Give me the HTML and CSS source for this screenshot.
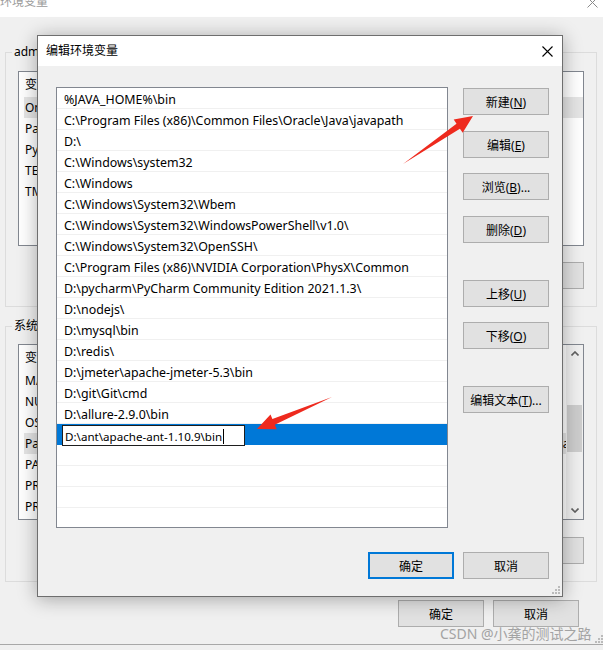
FILE: index.html
```html
<!DOCTYPE html>
<html lang="zh-CN">
<head>
<meta charset="utf-8">
<title>编辑环境变量</title>
<link rel="stylesheet" href="styles.css">
</head>
<body>
<div class="win">
  <div class="win-title">
    <span class="win-title-text">环境变量</span>
    <svg class="win-close" width="11" height="11" viewBox="0 0 11 11"><path d="M0.5 0.5L10.5 10.5M10.5 0.5L0.5 10.5" stroke="#8a8a8a" stroke-width="1"/></svg>
  </div>
  <div class="win-body">
    <div class="group g1">
      <div class="group-label">admin 的用户变量(<u>U</u>)</div>
      <div class="bglist l1">
        <div class="bgrows">
          <div class="bgrow head"><span class="c1">变量</span><span>值</span></div>
          <div class="bgrow sel"><span class="c1">OneDrive</span><span>C:\Users\admin\OneDrive</span></div>
          <div class="bgrow"><span class="c1">Path</span><span>C:\Users\admin\AppData\Local\Microsoft\WindowsApps;</span></div>
          <div class="bgrow"><span class="c1">PyCharm Community Edition</span><span>D:\pycharm\PyCharm Community Edition 2021.1.3\bin;</span></div>
          <div class="bgrow"><span class="c1">TEMP</span><span>C:\Users\admin\AppData\Local\Temp</span></div>
          <div class="bgrow"><span class="c1">TMP</span><span>C:\Users\admin\AppData\Local\Temp</span></div>
        </div>
      </div>
      <div class="bgbtns b1">
        <button class="btn">新建(<u>N</u>)...</button>
        <button class="btn">编辑(<u>E</u>)...</button>
        <button class="btn">删除(<u>D</u>)</button>
      </div>
    </div>
    <div class="group g2">
      <div class="group-label">系统变量(<u>S</u>)</div>
      <div class="bglist l2">
        <div class="bgrows">
          <div class="bgrow head"><span class="c1">变量</span><span>值</span></div>
          <div class="bgrow"><span class="c1">MAVEN_HOME</span><span>D:\maven</span></div>
          <div class="bgrow"><span class="c1">NUMBER_OF_PROCESSORS</span><span>8</span></div>
          <div class="bgrow"><span class="c1">OS</span><span>Windows_NT</span></div>
          <div class="bgrow sel"><span class="c1">Path</span><span>%JAVA_HOME%\bin;C:\Program Files (x86)\Common Files\Oracle\Java\javapath;</span></div>
          <div class="bgrow"><span class="c1">PATHEXT</span><span>.COM;.EXE;.BAT;.CMD;.VBS;.VBE;.JS;.JSE;.WSF;.WSH;.MSC</span></div>
          <div class="bgrow"><span class="c1">PROCESSOR_ARCHITECTURE</span><span>AMD64</span></div>
          <div class="bgrow"><span class="c1">PROCESSOR_IDENTIFIER</span><span>Intel64 Family 6</span></div>
        </div>
        <div class="vscroll">
          <div class="sarrow"><svg width="8" height="5" viewBox="0 0 8 5"><path d="M0.5 4.5L4 1L7.5 4.5" fill="none" stroke="#606060" stroke-width="1.6"/></svg></div>
          <div class="strack"><div class="sthumb"></div></div>
          <div class="sarrow"><svg width="8" height="5" viewBox="0 0 8 5"><path d="M0.5 0.5L4 4L7.5 0.5" fill="none" stroke="#606060" stroke-width="1.6"/></svg></div>
        </div>
      </div>
      <div class="bgbtns b2">
        <button class="btn">新建(<u>W</u>)...</button>
        <button class="btn">编辑(<u>I</u>)...</button>
        <button class="btn">删除(<u>L</u>)</button>
      </div>
    </div>
    <div class="win-foot">
      <button class="btn">确定</button>
      <button class="btn">取消</button>
    </div>
  </div>
  <svg class="grip win-grip" width="8" height="8" viewBox="0 0 8 8"><rect x="6" y="0" width="2" height="2" fill="#bbb"/><rect x="3" y="3" width="2" height="2" fill="#bbb"/><rect x="6" y="3" width="2" height="2" fill="#bbb"/><rect x="0" y="6" width="2" height="2" fill="#bbb"/><rect x="3" y="6" width="2" height="2" fill="#bbb"/><rect x="6" y="6" width="2" height="2" fill="#bbb"/></svg>
</div>

<div class="dlg">
  <div class="dlg-title">
    <span>编辑环境变量</span>
    <svg width="11" height="11" viewBox="0 0 11 11"><path d="M0.5 0.5L10.5 10.5M10.5 0.5L0.5 10.5" stroke="#000" stroke-width="1.1"/></svg>
  </div>
  <div class="dlg-body">
    <div class="dlg-main">
      <div class="plist">
        <div class="prow">%JAVA_HOME%\bin</div>
        <div class="prow">C:\Program Files (x86)\Common Files\Oracle\Java\javapath</div>
        <div class="prow">D:\</div>
        <div class="prow">C:\Windows\system32</div>
        <div class="prow">C:\Windows</div>
        <div class="prow">C:\Windows\System32\Wbem</div>
        <div class="prow">C:\Windows\System32\WindowsPowerShell\v1.0\</div>
        <div class="prow">C:\Windows\System32\OpenSSH\</div>
        <div class="prow">C:\Program Files (x86)\NVIDIA Corporation\PhysX\Common</div>
        <div class="prow">D:\pycharm\PyCharm Community Edition 2021.1.3\</div>
        <div class="prow">D:\nodejs\</div>
        <div class="prow">D:\mysql\bin</div>
        <div class="prow">D:\redis\</div>
        <div class="prow">D:\jmeter\apache-jmeter-5.3\bin</div>
        <div class="prow">D:\git\Git\cmd</div>
        <div class="prow">D:\allure-2.9.0\bin</div>
        <div class="prow psel"><div class="pedit">D:\ant\apache-ant-1.10.9\bin<span class="caret"></span></div></div>
        <div class="prow"></div>
        <div class="prow"></div>
        <div class="prow"></div>
        <div class="prow"></div>
      </div>
      <div class="pbtns">
        <button class="btn pb-new">新建(<u>N</u>)</button>
        <button class="btn pb-edit">编辑(<u>E</u>)</button>
        <button class="btn pb-browse">浏览(<u>B</u>)...</button>
        <button class="btn pb-del">删除(<u>D</u>)</button>
        <button class="btn pb-up">上移(<u>U</u>)</button>
        <button class="btn pb-down">下移(<u>O</u>)</button>
        <button class="btn pb-text">编辑文本(<u>T</u>)...</button>
      </div>
    </div>
    <div class="dlg-foot">
      <button class="btn btn-default">确定</button>
      <button class="btn">取消</button>
    </div>
  </div>
  <svg class="grip dlg-grip" width="8" height="8" viewBox="0 0 8 8"><rect x="6" y="0" width="2" height="2" fill="#bbb"/><rect x="3" y="3" width="2" height="2" fill="#bbb"/><rect x="6" y="3" width="2" height="2" fill="#bbb"/><rect x="0" y="6" width="2" height="2" fill="#bbb"/><rect x="3" y="6" width="2" height="2" fill="#bbb"/><rect x="6" y="6" width="2" height="2" fill="#bbb"/></svg>
</div>

<svg class="arrows" width="603" height="650" viewBox="0 0 603 650">
  <polygon points="403,164 456.5,123.7 453.7,119.6 473,116 462.7,132.8 459.9,128.7" fill="#ee2a1e"/>
  <polygon points="332,397 272.4,419.1 270.5,414.5 257,429 276.7,429.3 274.8,424.7" fill="#ee2a1e"/>
</svg>

<div class="watermark">CSDN @小龚的测试之路</div>
</body>
</html>
```

FILE: styles.css
```css
* { box-sizing: border-box; }

body {
  margin: 0;
  width: 603px;
  height: 650px;
  overflow: hidden;
  position: relative;
  background: #f0f0f0;
  font-family: "Noto Sans", "Noto Sans CJK SC", sans-serif;
  font-size: 12px;
  color: #000;
}

u { text-decoration: underline; text-underline-offset: 1px; }

.btn {
  font-family: inherit;
  font-size: 12px;
  color: #000;
  background: #e1e1e1;
  border: 1px solid #adadad;
  width: 86px;
  height: 27px;
  padding: 0;
  margin: 0;
  white-space: nowrap;
}

/* background window */
.win {
  height: 645px;
  border-bottom: 1px solid #a8a8a8;
  position: relative;
}

.win-title {
  height: 17px;
  background: #fff;
  display: flex;
  justify-content: space-between;
  overflow: hidden;
}

.win-title-text {
  color: #9a9a9a;
  line-height: 16px;
  margin-top: -6px;
}

.win-close { margin: -3px 5px 0 0; }

.win-body { padding: 0 6px 0 5px; }

.group { border: 1px solid #dcdcdc; }
.g1 { margin-top: 35px; }
.g2 { margin-top: 19px; }

.group-label {
  width: fit-content;
  margin: -9px 0 0 6px;
  padding: 0 2px;
  line-height: 16px;
  background: #f0f0f0;
  white-space: nowrap;
}

.bglist {
  margin: 11px 12px 0 12px;
  border: 1px solid #828790;
  background: #fff;
  display: flex;
  overflow: hidden;
}
.l1 { height: 175px; }
.l2 { height: 176px; margin-top: 10px; }

.bgrows { flex: 1; min-width: 0; }

.bgrow {
  height: 21px;
  line-height: 21px;
  margin-left: 5px;
  padding-left: 1px;
  display: flex;
  white-space: nowrap;
  overflow: hidden;
}
.bgrow.head { height: 25px; line-height: 25px; }
.bgrow.sel { background: #e5e5e5; }
.bgrow .c1 { width: 170px; flex: none; }

.vscroll {
  width: 17px;
  flex: none;
  background: #f0f0f0;
  display: flex;
  flex-direction: column;
}
.sarrow {
  height: 17px;
  display: flex;
  align-items: center;
  justify-content: center;
}
.strack { flex: 1; padding: 43px 1px 0 1px; }
.sthumb { height: 47px; background: #cdcdcd; }

.bgbtns {
  display: flex;
  justify-content: flex-end;
  gap: 8px;
  padding-right: 12px;
}
.b1 { margin-top: 16px; padding-bottom: 17px; }
.b2 { margin-top: 17px; padding-bottom: 17px; }

.win-foot {
  display: flex;
  justify-content: flex-end;
  gap: 9px;
  margin-top: 18px;
  padding-right: 18px;
}

.grip { position: absolute; }
.win-grip { right: 0; bottom: 1px; }

/* dialog */
.dlg {
  position: absolute;
  left: 37px;
  top: 35px;
  width: 526px;
  height: 562px;
  border: 1px solid #6e6e6e;
  background: #f0f0f0;
  box-shadow: 0 2px 18px rgba(0, 0, 0, 0.32);
}

.dlg-title {
  height: 30px;
  background: #fff;
  display: flex;
  align-items: center;
  justify-content: space-between;
  padding: 0 9px 0 8px;
  line-height: 16px;
}

.dlg-body {
  height: 530px;
  padding: 21px 13px 0 18px;
}

.dlg-main { display: flex; gap: 15px; }

.plist {
  width: 392px;
  height: 441px;
  border: 1px solid #828790;
  background: #fff;
  overflow: hidden;
}

.prow {
  height: 21px;
  border-bottom: 1px solid #f0f0f0;
  padding-top: 2px;
  line-height: 20px;
  padding-left: 7px;
  font-size: 12.4px;
  white-space: nowrap;
  overflow: visible;
}

.prow.psel {
  background: #0078d7;
  border-bottom-color: #0078d7;
  padding-left: 5px;
  padding-top: 1px;
}

.pedit {
  width: 183px;
  height: 21px;
  border: 1px solid #1e1e1e;
  background: #fff;
  padding-left: 2px;
  padding-top: 1px;
  font-size: 11.6px;
  line-height: 19px;
  white-space: nowrap;
}

.caret {
  display: inline-block;
  width: 1px;
  height: 15px;
  background: #000;
  vertical-align: -3px;
  margin-left: 1px;
}

.pbtns { display: flex; flex-direction: column; width: 86px; }
.pb-new { margin-top: 1px; }
.pb-edit { margin-top: 16px; }
.pb-browse { margin-top: 15px; }
.pb-del { margin-top: 16px; }
.pb-up { margin-top: 37px; }
.pb-down { margin-top: 15px; }
.pb-text { margin-top: 37px; }

.dlg-foot {
  display: flex;
  justify-content: flex-end;
  gap: 9px;
  margin-top: 24px;
}

.btn-default {
  border-color: #0078d7;
  box-shadow: inset 0 0 0 1px #0078d7;
}

.dlg-grip { right: 2px; bottom: 2px; }

/* overlays */
.arrows {
  position: absolute;
  left: 0;
  top: 0;
  pointer-events: none;
}

.watermark {
  position: absolute;
  left: 440px;
  top: 624px;
  font-size: 14px;
  line-height: 20px;
  color: #a3a3a3;
  white-space: nowrap;
}
```
